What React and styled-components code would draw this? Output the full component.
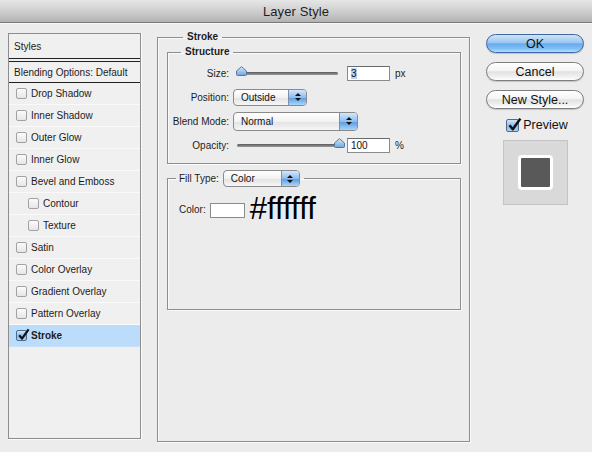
import React from "react";
import styled, { createGlobalStyle } from "styled-components";

const GlobalStyle = createGlobalStyle`
    html, body {
        margin: 0;
        padding: 0;
        background: #ececec;
    }
    body {
        font-family: "Liberation Sans", Arial, sans-serif;
        font-size: 10px;
        color: #1c1c1c;
    }
`;

const Window = styled.div`
    width: 592px;
    height: 452px;
    background: #ececec;
    overflow: hidden;
`;

const TitleBar = styled.div`
    box-sizing: border-box;
    height: 23px;
    display: flex;
    align-items: center;
    justify-content: center;
    background: linear-gradient(#e6e6e6, #cfcfcf 50%, #b3b3b3);
    border-bottom: 1px solid #7b7b7b;
    box-shadow: 0 1px 0 #f6f6f6;
    font-size: 13px;
    color: #1e1e1e;
    letter-spacing: 0.1px;
`;

const Body = styled.div`
    display: flex;
    align-items: flex-start;
    padding: 0 8px;
    gap: 16px;
`;

/* ---------- left style list ---------- */

const StyleList = styled.div`
    box-sizing: border-box;
    margin-top: 10px;
    width: 133px;
    height: 406px;
    background: #f0f0f0;
    border: 1px solid #8d8d8d;
    box-shadow: 0 1px 0 #fbfbfb, 1px 0 0 #fbfbfb;
`;

const ListHeader = styled.div`
    height: 24px;
    display: flex;
    align-items: center;
    padding-left: 5px;
    border-bottom: 1px solid #222;
`;

const BlendRow = styled.div`
    height: 20px;
    display: flex;
    align-items: center;
    padding-left: 5px;
    margin-top: 2px;
    border-top: 1px solid #222;
    border-bottom: 1px solid #222;
`;

const ListRow = styled.div`
    box-sizing: border-box;
    height: 22px;
    display: flex;
    align-items: center;
    gap: 4px;
    padding-left: ${(p) => (p.$indent ? 19 : 7)}px;
    background: ${(p) => (p.$selected ? "#bcdcfb" : "transparent")};
    border-bottom: 1px solid ${(p) => (p.$selected ? "#c6e0fa" : "#fafafa")};
    font-weight: ${(p) => (p.$selected ? "bold" : "normal")};
`;

const Box = styled.span`
    box-sizing: border-box;
    position: relative;
    width: ${(p) => p.$size || 11}px;
    height: ${(p) => p.$size || 11}px;
    border: 1px solid ${(p) => (p.$checked ? "#4a6c94" : "#a2a2a2")};
    border-radius: 2px;
    background: ${(p) =>
        p.$checked ? "linear-gradient(#cfe4f8, #8fbbe6 55%, #a9d0f4)" : "linear-gradient(#fbfbfb, #e6e6e6)"};
    flex-shrink: 0;

    svg {
        position: absolute;
        left: 0;
        top: -3px;
    }
`;

const CheckMark = ({ size = 13 }) => (
    <svg width={size} height={size} viewBox="0 0 13 13">
        <path d="M2.2 7.2 L5 10.6 L11.6 1.4" fill="none" stroke="#111" strokeWidth="2.2" strokeLinejoin="round" />
    </svg>
);

const Checkbox = ({ checked, size }) => (
    <Box $checked={checked} $size={size}>
        {checked && <CheckMark size={size ? size + 2 : 13} />}
    </Box>
);

/* ---------- middle settings panel ---------- */

const Group = styled.fieldset`
    box-sizing: border-box;
    margin: 0;
    min-inline-size: 0;
    border: 1px solid #8e8e8e;
    box-shadow: inset 1px 1px 0 #fafafa, 1px 1px 0 #fafafa;
    padding: ${(p) => p.$pad || "0"};
    height: ${(p) => (p.$height ? `${p.$height}px` : "auto")};
    width: ${(p) => (p.$width ? `${p.$width}px` : "auto")};
    margin-top: ${(p) => p.$top || 0}px;
`;

const Legend = styled.legend`
    font-weight: bold;
    font-size: 10px;
    padding: 0 4px;
    margin-left: ${(p) => p.$offset || 0}px;
    line-height: 12px;
`;

const FillLegend = styled.legend`
    display: flex;
    align-items: center;
    gap: 4px;
    padding: 0 4px 0 3px;
    margin-left: 8px;
`;

const SettingRow = styled.div`
    height: 24px;
    display: flex;
    align-items: center;
`;

const RowLabel = styled.span`
    width: 61px;
    text-align: right;
    margin-right: ${(p) => (p.$slider ? 8 : 4)}px;
`;

const SliderTrack = styled.div`
    position: relative;
    width: 101px;
    height: 3px;
    border-radius: 2px;
    background: linear-gradient(#5a5a5a, #9a9a9a);
    margin-right: 9px;

    svg {
        position: absolute;
        top: -6px;
        left: ${(p) => p.$pos}px;
    }
`;

const Thumb = () => (
    <svg width="11" height="10" viewBox="0 0 11 10">
        <defs>
            <linearGradient id="thumbFill" x1="0" y1="0" x2="0" y2="1">
                <stop offset="0" stopColor="#d7eafc" />
                <stop offset="1" stopColor="#6ea6de" />
            </linearGradient>
        </defs>
        <path d="M0.5 5 L5.5 0.6 L10.5 5 L10.5 8.5 Q10.5 9.5 9.5 9.5 L1.5 9.5 Q0.5 9.5 0.5 8.5 Z" fill="url(#thumbFill)" stroke="#5676a4" />
    </svg>
);

const NumberField = styled.div`
    box-sizing: border-box;
    width: 43px;
    height: 15px;
    background: #fff;
    border: 1px solid #8b8b8b;
    border-top-color: #6a6a6a;
    padding: 1px 3px;
    font-size: 10px;
    line-height: 12px;
    color: #111;
    margin-right: 5px;
`;

const Selected = styled.span`
    background: #b7d2f2;
`;

const Popup = styled.div`
    box-sizing: border-box;
    display: flex;
    width: ${(p) => p.$width}px;
    height: ${(p) => p.$height || 18}px;
    border: 1px solid #8a8a8a;
    border-radius: 4px;
    background: linear-gradient(#ffffff, #f2f2f2 50%, #e4e4e4 55%, #f6f6f6);
    overflow: hidden;
    font-size: 10px;
    color: #111;
`;

const PopupText = styled.span`
    flex: 1;
    display: flex;
    align-items: center;
    padding-left: 7px;
`;

const PopupArrows = styled.span`
    width: 17px;
    display: flex;
    flex-direction: column;
    align-items: center;
    justify-content: center;
    gap: 2px;
    border-left: 1px solid #7b8fb0;
    background: linear-gradient(#d4e7fb, #8fbdec 50%, #5f9ee2 55%, #a9d6fb);
`;

const Arrow = styled.span`
    width: 0;
    height: 0;
    border-left: 3px solid transparent;
    border-right: 3px solid transparent;
    ${(p) => (p.$down ? "border-top: 3px solid #111;" : "border-bottom: 3px solid #111;")}
`;

const PopupButton = ({ value, width, height }) => (
    <Popup $width={width} $height={height}>
        <PopupText>{value}</PopupText>
        <PopupArrows>
            <Arrow />
            <Arrow $down />
        </PopupArrows>
    </Popup>
);

const ColorRow = styled.div`
    display: flex;
    align-items: center;
    padding: 7px 0 0 11px;
`;

const Swatch = styled.div`
    box-sizing: border-box;
    width: 35px;
    height: 15px;
    margin: 3px 5px 0 4px;
    background: #fff;
    border: 1px solid #8b8b8b;
`;

const HexValue = styled.span`
    font-size: 31px;
    line-height: 30px;
    color: #000;
`;

/* ---------- right button column ---------- */

const ButtonColumn = styled.div`
    margin-top: 11px;
    width: 98px;
    display: flex;
    flex-direction: column;
    align-items: center;
    gap: 9px;
`;

const PillButton = styled.div`
    box-sizing: border-box;
    width: 98px;
    height: 19px;
    border-radius: 10px;
    display: flex;
    align-items: center;
    justify-content: center;
    font-size: 12.5px;
    color: #111;
    border: 1px solid ${(p) => (p.$primary ? "#40679f" : "#7e7e7e")};
    background: ${(p) =>
        p.$primary
            ? "linear-gradient(#cfe4fa, #9ac7f2 45%, #6aaaec 52%, #7dbff6 80%, #b6e0ff)"
            : "linear-gradient(#ffffff, #f4f4f4 45%, #e2e2e2 52%, #f0f0f0 80%, #ffffff)"};
    box-shadow: 0 1px 1px rgba(0, 0, 0, 0.18);
`;

const PreviewToggle = styled.label`
    display: flex;
    align-items: center;
    gap: 4px;
    font-size: 12.5px;
    color: #111;
    margin-top: 0;
    padding-left: 4px;
`;

const PreviewWell = styled.div`
    box-sizing: border-box;
    width: 65px;
    height: 65px;
    margin-top: -1px;
    background: #d9d9d9;
    border: 1px solid #c4c4c4;
    display: flex;
    align-items: center;
    justify-content: center;
`;

const PreviewChip = styled.div`
    box-sizing: border-box;
    width: 35px;
    height: 35px;
    border: 3px solid #fff;
    border-radius: 4px;
    background: #595959;
`;

const styleItems = [
    { name: "Drop Shadow" },
    { name: "Inner Shadow" },
    { name: "Outer Glow" },
    { name: "Inner Glow" },
    { name: "Bevel and Emboss" },
    { name: "Contour", indent: true },
    { name: "Texture", indent: true },
    { name: "Satin" },
    { name: "Color Overlay" },
    { name: "Gradient Overlay" },
    { name: "Pattern Overlay" },
    { name: "Stroke", checked: true, selected: true },
];

const App = () => (
    <Window>
        <GlobalStyle />
        <TitleBar>Layer Style</TitleBar>
        <Body>
            <StyleList>
                <ListHeader>Styles</ListHeader>
                <BlendRow>Blending Options: Default</BlendRow>
                {styleItems.map((item) => (
                    <ListRow key={item.name} $indent={item.indent} $selected={item.selected}>
                        <Checkbox checked={item.checked} />
                        {item.name}
                    </ListRow>
                ))}
            </StyleList>

            <Group $width={313} $height={411} $pad="0 8px 0 9px" $top={8}>
                <Legend $offset={16}>Stroke</Legend>
                <Group $pad="3px 0 6px 0" $top={3}>
                    <Legend $offset={13}>Structure</Legend>
                    <SettingRow>
                        <RowLabel $slider>Size:</RowLabel>
                        <SliderTrack $pos={-1}>
                            <Thumb />
                        </SliderTrack>
                        <NumberField>
                            <Selected>3</Selected>
                        </NumberField>
                        px
                    </SettingRow>
                    <SettingRow>
                        <RowLabel>Position:</RowLabel>
                        <PopupButton value="Outside" width={74} height={17} />
                    </SettingRow>
                    <SettingRow>
                        <RowLabel>Blend Mode:</RowLabel>
                        <PopupButton value="Normal" width={125} height={19} />
                    </SettingRow>
                    <SettingRow>
                        <RowLabel $slider>Opacity:</RowLabel>
                        <SliderTrack $pos={97}>
                            <Thumb />
                        </SliderTrack>
                        <NumberField>100</NumberField>%
                    </SettingRow>
                </Group>
                <Group $height={140} $top={6}>
                    <FillLegend>
                        Fill Type:
                        <PopupButton value="Color" width={77} height={17} />
                    </FillLegend>
                    <ColorRow>
                        Color:
                        <Swatch />
                        <HexValue>#ffffff</HexValue>
                    </ColorRow>
                </Group>
            </Group>

            <ButtonColumn>
                <PillButton $primary>OK</PillButton>
                <PillButton>Cancel</PillButton>
                <PillButton>New Style...</PillButton>
                <PreviewToggle>
                    <Checkbox checked size={13} />
                    Preview
                </PreviewToggle>
                <PreviewWell>
                    <PreviewChip />
                </PreviewWell>
            </ButtonColumn>
        </Body>
    </Window>
);

export default App;
